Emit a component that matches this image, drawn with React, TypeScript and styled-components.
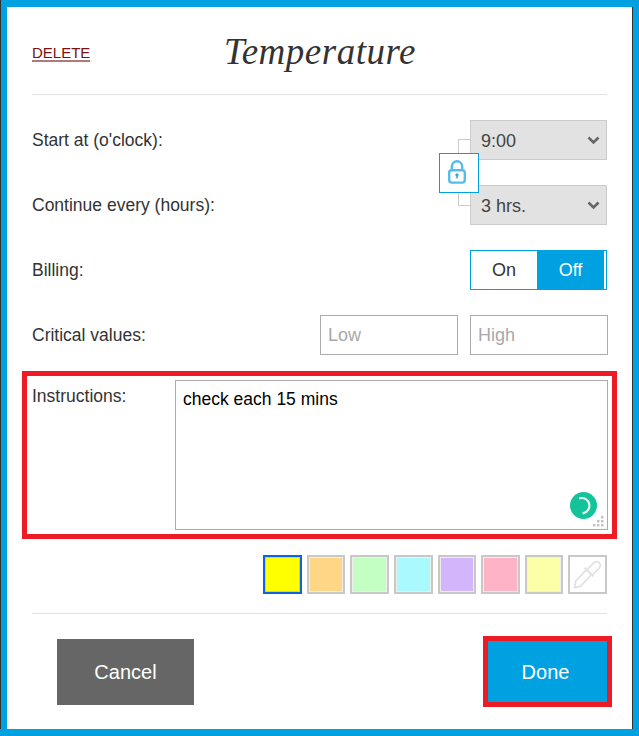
import { createGlobalStyle } from 'styled-components';
import styled from 'styled-components';

const GlobalStyle = createGlobalStyle`
  html, body {
    margin: 0;
    padding: 0;
    background: #fff;
  }
  * {
    box-sizing: border-box;
  }
`;

const Frame = styled.div`
  width: 639px;
  height: 736px;
  background: #fff;
  border: 7px solid #00a1e0;
  padding: 0 25px;
  font-family: 'Liberation Sans', Arial, sans-serif;
  color: #333;
  position: relative;
`;

// thin dark lines along the blue frame
const EdgeLine = styled.div<{ $side: 'left' | 'right' }>`
  position: absolute;
  bottom: 0;
  width: 1px;
  background: #333;
  ${(p) => (p.$side === 'left' ? 'left: -7px; top: -7px;' : 'right: -1px; top: 0;')}
`;

const Header = styled.div`
  height: 88px;
  display: flex;
  align-items: center;
  border-bottom: 1px solid #e2e2e2;
  position: relative;
`;

const DeleteLink = styled.a`
  font-size: 15px;
  line-height: 17px;
  color: #7a1010;
  border-bottom: 2px solid #b07a7a;
  margin-top: 4px;
  height: 18px;
`;

const Title = styled.h1`
  position: absolute;
  left: 192px;
  top: 23px;
  margin: 0;
  font: italic 400 37px/44px 'Liberation Serif', 'Times New Roman', serif;
  letter-spacing: 0.5px;
  color: #333;
`;

const Form = styled.div`
  padding-top: 25px;
  position: relative;
`;

const Row = styled.div`
  display: flex;
  align-items: center;
  justify-content: space-between;
  height: 40px;
  margin-bottom: 25px;
`;

const Label = styled.label`
  font-size: 17.5px;
  color: #333;
`;

const SelectWrap = styled.div`
  position: relative;
  width: 137px;
  height: 40px;
`;

const Select = styled.select`
  appearance: none;
  width: 100%;
  height: 100%;
  border: 1px solid #cbcbcb;
  border-radius: 0;
  background: #e2e2e2;
  color: #444;
  font: 18px 'Liberation Sans', Arial, sans-serif;
  padding: 2px 10px 0;
  outline: none;
`;

const Chevron = styled.svg`
  position: absolute;
  right: 7px;
  top: 15px;
  width: 13px;
  height: 10px;
  pointer-events: none;
`;

const LockBox = styled.div`
  position: absolute;
  left: 407px;
  top: 58px;
  width: 40px;
  height: 40px;
  border: 1px solid #00a1e0;
  background: #fff;
  display: flex;
  align-items: center;
  justify-content: center;
  z-index: 2;
`;

const LockIcon = styled.svg`
  width: 18px;
  height: 24px;
  margin: 0 4px 3px 0;
`;

const Connector = styled.div<{ $top: number }>`
  position: absolute;
  left: 426px;
  top: ${(p) => p.$top}px;
  width: 12px;
  height: 14px;
  border-left: 1px solid #cbcbcb;
  ${(p) => (p.$top < 60 ? 'border-top: 1px solid #cbcbcb;' : 'border-bottom: 1px solid #cbcbcb;')}
`;

const Toggle = styled.div`
  display: flex;
  width: 137px;
  height: 40px;
  border: 1px solid #00a1e0;
`;

const ToggleOption = styled.div<{ $active?: boolean }>`
  width: ${(p) => (p.$active ? '67px' : '66px')};
  display: flex;
  align-items: center;
  justify-content: center;
  font-size: 18px;
  color: ${(p) => (p.$active ? '#fff' : '#333')};
  background: ${(p) => (p.$active ? '#00a1e0' : '#fff')};
`;

const Inputs = styled.div`
  display: flex;
  gap: 12px;
  margin-right: -1px;
`;

const TextInput = styled.input`
  width: 138px;
  height: 40px;
  border: 1px solid #ababab;
  border-radius: 0;
  padding: 0 7px;
  outline: none;
  font: 18px 'Liberation Sans', Arial, sans-serif;
  &::placeholder {
    color: #a9a9a9;
    opacity: 1;
  }
`;

const Highlight = styled.div`
  display: flex;
  height: 168px;
  margin: -9px -10px 0 -10px;
  border: 5px solid #ed1c24;
  padding: 4px 3px 4px 5px;
`;

const InstructionsLabel = styled(Label)`
  width: 143px;
  padding-top: 6px;
`;

const AreaWrap = styled.div`
  position: relative;
  width: 433px;
  height: 150px;
`;

const TextArea = styled.textarea`
  display: block;
  width: 100%;
  height: 100%;
  border: 1px solid #ababab;
  border-radius: 0;
  padding: 8px 7px;
  resize: none;
  outline: none;
  color: #000;
  font: 17.5px/21px 'Liberation Sans', Arial, sans-serif;
`;

const GreenBadge = styled.svg`
  position: absolute;
  right: 11px;
  bottom: 11px;
  width: 27px;
  height: 27px;
`;

const Grip = styled.svg`
  position: absolute;
  right: 4px;
  bottom: 3px;
  width: 12px;
  height: 12px;
`;

const Swatches = styled.div`
  display: flex;
  justify-content: flex-end;
  gap: 5px;
  margin-top: 16px;
  height: 40px;
`;

const Swatch = styled.div<{ $color: string; $selected?: boolean }>`
  width: 38.6px;
  height: 39px;
  background: ${(p) => p.$color};
  border: 2px solid ${(p) => (p.$selected ? '#0a63e8' : '#c8c8c8')};
  box-shadow: inset 0 0 0 1px ${(p) => (p.$selected ? '#b7c8d8' : '#eeeeee')};
`;

const PickerSwatch = styled.div`
  width: 38.6px;
  height: 39px;
  border: 2px solid #c8c8c8;
  background: #fff;
  display: flex;
  align-items: center;
  justify-content: center;
`;

const Footer = styled.div`
  margin-top: 18px;
  border-top: 1px solid #e2e2e2;
  padding: 25px 0 0 25px;
  display: flex;
  justify-content: space-between;
  align-items: flex-start;
  position: relative;
`;

const CancelButton = styled.button`
  width: 137px;
  height: 66px;
  border: 0;
  border-radius: 0;
  background: #666;
  color: #fff;
  font: 20px 'Liberation Sans', Arial, sans-serif;
`;

const DoneButton = styled.button`
  width: 129px;
  height: 71px;
  margin: -3px -5px 0 0;
  border: 5px solid #ed1c24;
  border-radius: 0;
  padding: 2px 4px 0 0;
  background: #00a1e0;
  color: #fff;
  font: 20px 'Liberation Sans', Arial, sans-serif;
`;

const swatchColors = ['#ffff00', '#ffd685', '#c3ffc3', '#a8faff', '#d3b5fb', '#ffb3c6', '#fdffa8'];

const ChevronIcon = () => (
  <Chevron viewBox="0 0 13 10">
    <path d="M1.5 2.5 L6.5 7.5 L11.5 2.5" fill="none" stroke="#666" strokeWidth="2.6" />
  </Chevron>
);

const App = () => {
  return (
    <>
      <GlobalStyle />
      <Frame>
        <EdgeLine $side="left" />
        <EdgeLine $side="right" />
        <Header>
          <DeleteLink>DELETE</DeleteLink>
          <Title>Temperature</Title>
        </Header>
        <Form>
          <Connector $top={44} />
          <Connector $top={97} />
          <LockBox>
            <LockIcon viewBox="0 0 18 24" fill="none" stroke="#55bdec" strokeWidth="2.4">
              <path d="M3.8 10 V6.5 a5.2 5.2 0 0 1 10.4 0 V10" />
              <rect x="1.2" y="10.2" width="15.6" height="12.4" rx="2.5" />
              <circle cx="9" cy="15" r="1.7" fill="#3aa9dc" stroke="none" />
              <path d="M9 15.5 V18.5" strokeWidth="1.5" stroke="#3aa9dc" />
            </LockIcon>
          </LockBox>
          <Row>
            <Label>Start at (o'clock):</Label>
            <SelectWrap>
              <Select defaultValue="9:00">
                <option>9:00</option>
              </Select>
              <ChevronIcon />
            </SelectWrap>
          </Row>
          <Row>
            <Label>Continue every (hours):</Label>
            <SelectWrap>
              <Select defaultValue="3 hrs.">
                <option>3 hrs.</option>
              </Select>
              <ChevronIcon />
            </SelectWrap>
          </Row>
          <Row>
            <Label>Billing:</Label>
            <Toggle>
              <ToggleOption>On</ToggleOption>
              <ToggleOption $active>Off</ToggleOption>
            </Toggle>
          </Row>
          <Row>
            <Label>Critical values:</Label>
            <Inputs>
              <TextInput placeholder="Low" />
              <TextInput placeholder="High" />
            </Inputs>
          </Row>
          <Highlight>
            <InstructionsLabel>Instructions:</InstructionsLabel>
            <AreaWrap>
              <TextArea defaultValue="check each 15 mins" />
              <GreenBadge viewBox="0 0 27 27">
                <circle cx="13.5" cy="13.5" r="13.5" fill="#15c39a" />
                <path d="M10 6.2 a7.6 7.6 0 0 1 3.5 14.9" fill="none" stroke="#e4f8f2" strokeWidth="2.2" strokeLinecap="round" />
              </GreenBadge>
              <Grip viewBox="0 0 12 12" fill="#c0c0c0">
                <rect x="9" y="1" width="2.4" height="2.4" />
                <rect x="5" y="5" width="2.4" height="2.4" />
                <rect x="9" y="5" width="2.4" height="2.4" />
                <rect x="1" y="9" width="2.4" height="2.4" />
                <rect x="5" y="9" width="2.4" height="2.4" />
                <rect x="9" y="9" width="2.4" height="2.4" />
              </Grip>
            </AreaWrap>
          </Highlight>
          <Swatches>
            {swatchColors.map((c, i) => (
              <Swatch key={c} $color={c} $selected={i === 0} />
            ))}
            <PickerSwatch>
              <svg width="34" height="35" viewBox="0 0 35 35" fill="none" stroke="#e2e2e2" strokeWidth="1.8" strokeLinejoin="round">
                <path d="M15.5 13 L5 24 L3.5 31 L10 29.5 L20.5 18" />
                <path d="M17 12 L23.5 5.5 a3.8 3.8 0 0 1 5.5 5.5 L22.5 17.5" />
                <path d="M14 10.5 L23 19.5" strokeWidth="2.4" />
              </svg>
            </PickerSwatch>
          </Swatches>
          <Footer>
            <CancelButton>Cancel</CancelButton>
            <DoneButton>Done</DoneButton>
          </Footer>
        </Form>
      </Frame>
    </>
  );
};

export default App;
